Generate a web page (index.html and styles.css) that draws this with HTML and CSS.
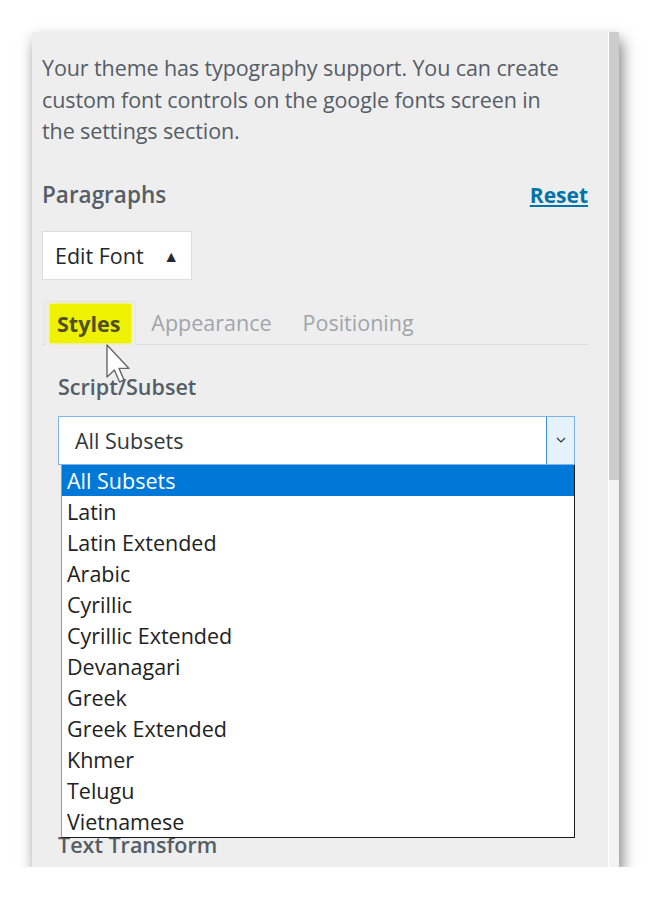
FILE: index.html
```html
<!DOCTYPE html>
<html>
<head>
    <title>Typography - Paragraphs</title>
    <link rel="stylesheet" href="styles.css">
</head>
<body>
    <div class="panel">
        <div class="panel-body">
            <p class="intro">Your theme has typography support. You can create custom font controls on the google fonts screen in the settings section.</p>

            <div class="section-head">
                <h3>Paragraphs</h3>
                <a class="reset" href="#">Reset</a>
            </div>

            <button class="edit-font">Edit Font <span class="caret">&#9650;</span></button>

            <div class="tabs">
                <div class="tab active"><span class="marker">Styles</span></div>
                <div class="tab">Appearance</div>
                <div class="tab">Positioning</div>
            </div>

            <div class="field">
                <label>Script/Subset</label>
                <div class="select">
                    <span class="select-value">All Subsets</span>
                    <span class="select-arrow">
                        <svg width="10" height="6" viewBox="0 0 10 6"><path d="M1 1 L5 5 L9 1" fill="none" stroke="#333" stroke-width="1.2"/></svg>
                    </span>
                    <ul class="options">
                        <li class="selected">All Subsets</li>
                        <li>Latin</li>
                        <li>Latin Extended</li>
                        <li>Arabic</li>
                        <li>Cyrillic</li>
                        <li>Cyrillic Extended</li>
                        <li>Devanagari</li>
                        <li>Greek</li>
                        <li>Greek Extended</li>
                        <li>Khmer</li>
                        <li>Telugu</li>
                        <li>Vietnamese</li>
                    </ul>
                </div>
            </div>

            <div class="field hidden-under">
                <label>Text Transform</label>
            </div>

            <svg class="cursor" width="26" height="40" viewBox="0 0 13 20">
                <path d="M0.5 0.5 L0.5 16.5 L4.2 13 L6.8 19 L9 18 L6.5 12.2 L11.5 12.2 Z" fill="#fff" stroke="#666" stroke-width="0.7" stroke-linejoin="round"/>
            </svg>
        </div>
        <div class="scrollbar"><div class="thumb"></div></div>
    </div>
</body>
</html>
```

FILE: styles.css
```css
body {
    margin: 0;
    padding: 32px 0 0 32px;
    background-color: #ffffff;
    font-family: "Open Sans", "Noto Sans", sans-serif;
}

.panel {
    width: 587px;
    height: 835px;
    display: flex;
    background-color: #eeeeee;
    box-shadow: 3px 8px 14px rgba(0, 0, 0, 0.5);
    overflow: hidden;
}

.panel-body {
    flex: 1;
    position: relative;
    padding: 20px 20px 0 10px;
    color: #555d66;
}

.intro {
    margin: 0;
    max-width: 522px;
    font-size: 21.5px;
    line-height: 31.5px;
    letter-spacing: -0.1px;
}

.section-head {
    display: flex;
    justify-content: space-between;
    align-items: center;
    height: 30px;
    margin-top: 33px;
}

.section-head h3 {
    margin: 0;
    font-size: 22.5px;
    font-weight: 600;
    color: #555d66;
}

.reset {
    color: #0073aa;
    font-weight: 700;
    font-size: 21px;
    text-decoration: underline;
}

.edit-font {
    display: block;
    margin-top: 21px;
    height: 49px;
    width: 150px;
    padding: 0 0 0 12px;
    text-align: left;
    background-color: #ffffff;
    border: 1px solid #dddddd;
    font-family: inherit;
    font-size: 21.5px;
    color: #23282d;
}

.caret {
    font-size: 16px;
    margin-left: 14px;
    vertical-align: 2px;
}

.tabs {
    display: flex;
    margin-top: 21px;
    height: 43px;
    border-bottom: 1px solid #dcdcdc;
}

.tab {
    padding: 2px 16px 0 15px;
    font-size: 21.5px;
    line-height: 40px;
    color: #a0a5aa;
}

.tab.active {
    margin-left: 2px;
    padding: 2px 4px 0 5px;
    border: 1px solid #e4e4e4;
    border-bottom: none;
    margin-bottom: -1px;
    background-color: #eeeeee;
}

.marker {
    background-color: #eef200;
    color: #4f4f22;
    font-weight: 700;
    padding: 5px 11px 5px 7px;
    box-shadow: 0 0 3px #eef200;
}

.field {
    padding: 0 13px 0 16px;
}

.field label {
    display: block;
    margin-top: 28px;
    font-size: 21.5px;
    line-height: 28px;
    font-weight: 600;
    color: #555d66;
}

.select {
    position: relative;
    margin-top: 15px;
    height: 47px;
    background-color: #ffffff;
    border: 1px solid #7eb4ea;
    display: flex;
    align-items: center;
}

.select-value {
    flex: 1;
    padding-left: 16px;
    font-size: 21.5px;
    color: #32373c;
}

.select-arrow {
    width: 27px;
    height: 47px;
    display: flex;
    align-items: center;
    justify-content: center;
    background-color: #e5f1fb;
    border-left: 1px solid #3c8fd8;
}

.options {
    position: absolute;
    top: 48px;
    left: 2px;
    right: -1px;
    margin: 0;
    padding: 0;
    list-style: none;
    background-color: #ffffff;
    border: 1px solid #1a1a1a;
    border-top: none;
    border-left-color: #9a9a9a;
    z-index: 2;
}

.options li {
    height: 31px;
    line-height: 31px;
    padding-left: 5px;
    font-size: 21.5px;
    color: #222222;
}

.options li.selected {
    background-color: #0078d7;
    color: #ffffff;
}

.hidden-under label {
    margin-top: 366px;
}

.cursor {
    position: absolute;
    left: 74px;
    top: 312px;
    z-index: 3;
}

.scrollbar {
    width: 10px;
    background-color: #f3f3f3;
    border-left: 1px solid #ffffff;
}

.thumb {
    height: 448px;
    background-color: #cdcdcd;
}
```
